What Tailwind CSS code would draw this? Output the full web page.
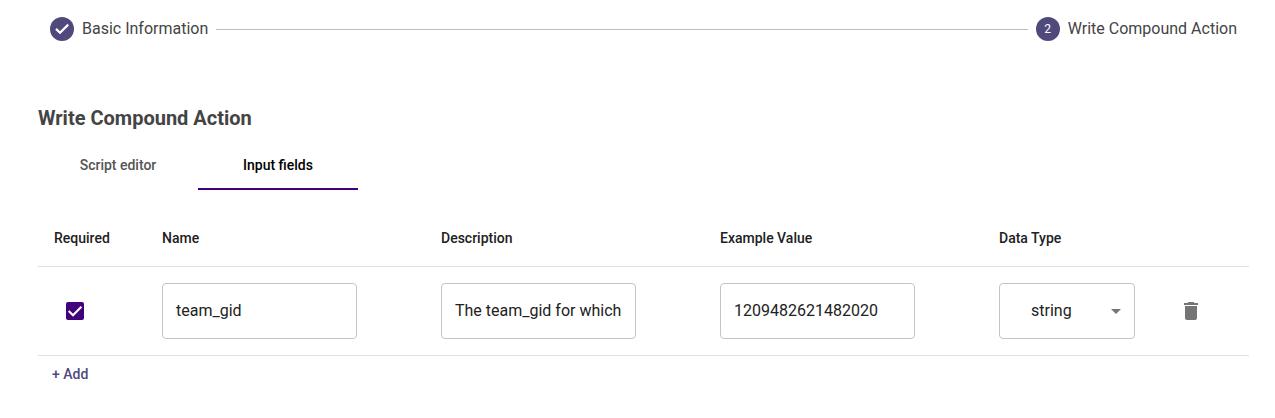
<!DOCTYPE html>
<html lang="en"><head><meta charset="utf-8"><title>Write Compound Action</title>
<script src="https://cdn.jsdelivr.net/npm/@tailwindcss/browser@4"></script></head>
<body class="bg-white font-['Roboto',sans-serif] text-[#212121] h-[418px] overflow-hidden">
<header class="flex items-center h-6 mt-[17px] ml-[50px] mr-[38px] text-base text-[#444]">
<svg class="size-6 shrink-0" viewBox="0 0 24 24"><circle cx="12" cy="12" r="12" fill="#4f4a7b"/><path d="M6 11.9 10 15.7 18.2 7.6" fill="none" stroke="#fff" stroke-width="2.2"/></svg>
<span class="ml-2 whitespace-nowrap">Basic Information</span>
<div class="h-px bg-[#bdbdbd] grow mx-2"></div>
<div class="size-6 rounded-full bg-[#4f4a7b] text-white text-xs flex items-center justify-center">2</div>
<span class="ml-2 whitespace-nowrap">Write Compound Action</span>
</header>
<main class="ml-[38px] mr-[26px]">
<h1 class="mt-[63px] h-7 leading-7 text-xl font-bold text-[#444]">Write Compound Action</h1>
<nav class="flex mt-[10px] h-12 text-sm font-medium text-[#555]">
<div class="w-40 flex items-center justify-center pb-0.5">Script editor</div>
<div class="w-40 flex items-center justify-center border-b-2 border-[#43007c] text-black">Input fields</div>
</nav>
<section class="mt-5">
<div class="grid grid-cols-[108px_279px_279px_279px_168px_1fr] pl-4 h-[57px] items-center border-b border-[#e0e0e0] text-sm font-medium">
<div>Required</div><div>Name</div><div>Description</div><div>Example Value</div><div>Data Type</div></div>
<div class="grid grid-cols-[108px_279px_279px_279px_168px_1fr] pl-4 h-[89px] items-center border-b border-[#e0e0e0] text-base">
<svg class="ml-[9px] size-6" viewBox="0 0 24 24"><rect x="3" y="3" width="18" height="18" rx="2" fill="#43007c"/><path d="M5.7 12.1 10 16.2 18.4 7.8" fill="none" stroke="#fff" stroke-width="2.1"/></svg>
<div class="w-[195px] h-14 rounded border border-[#c4c4c4] px-[13px] flex items-center">team_gid</div>
<div class="w-[195px] h-14 rounded border border-[#c4c4c4] px-[13px] flex items-center whitespace-nowrap">The team_gid for which</div>
<div class="w-[195px] h-14 rounded border border-[#c4c4c4] px-[13px] flex items-center">1209482621482020</div>
<div class="w-[136px] h-14 rounded border border-[#c4c4c4] pl-[31px] pr-[6px] flex items-center justify-between">string<svg class="size-6" viewBox="0 0 24 24" fill="#757575"><path d="M7 10l5 5 5-5z"/></svg></div>
<svg class="ml-3 size-6" viewBox="0 0 24 24" fill="#757575"><path d="M6 19c0 1.1.9 2 2 2h8c1.1 0 2-.9 2-2V7H6v12zM19 4h-3.5l-1-1h-5l-1 1H5v2h14V4z"/></svg>
</div>
<div class="ml-[14px] mt-[7px] text-sm leading-[22px] font-medium text-[#4f4a7b]">+ Add</div>
</section></main></body></html>
